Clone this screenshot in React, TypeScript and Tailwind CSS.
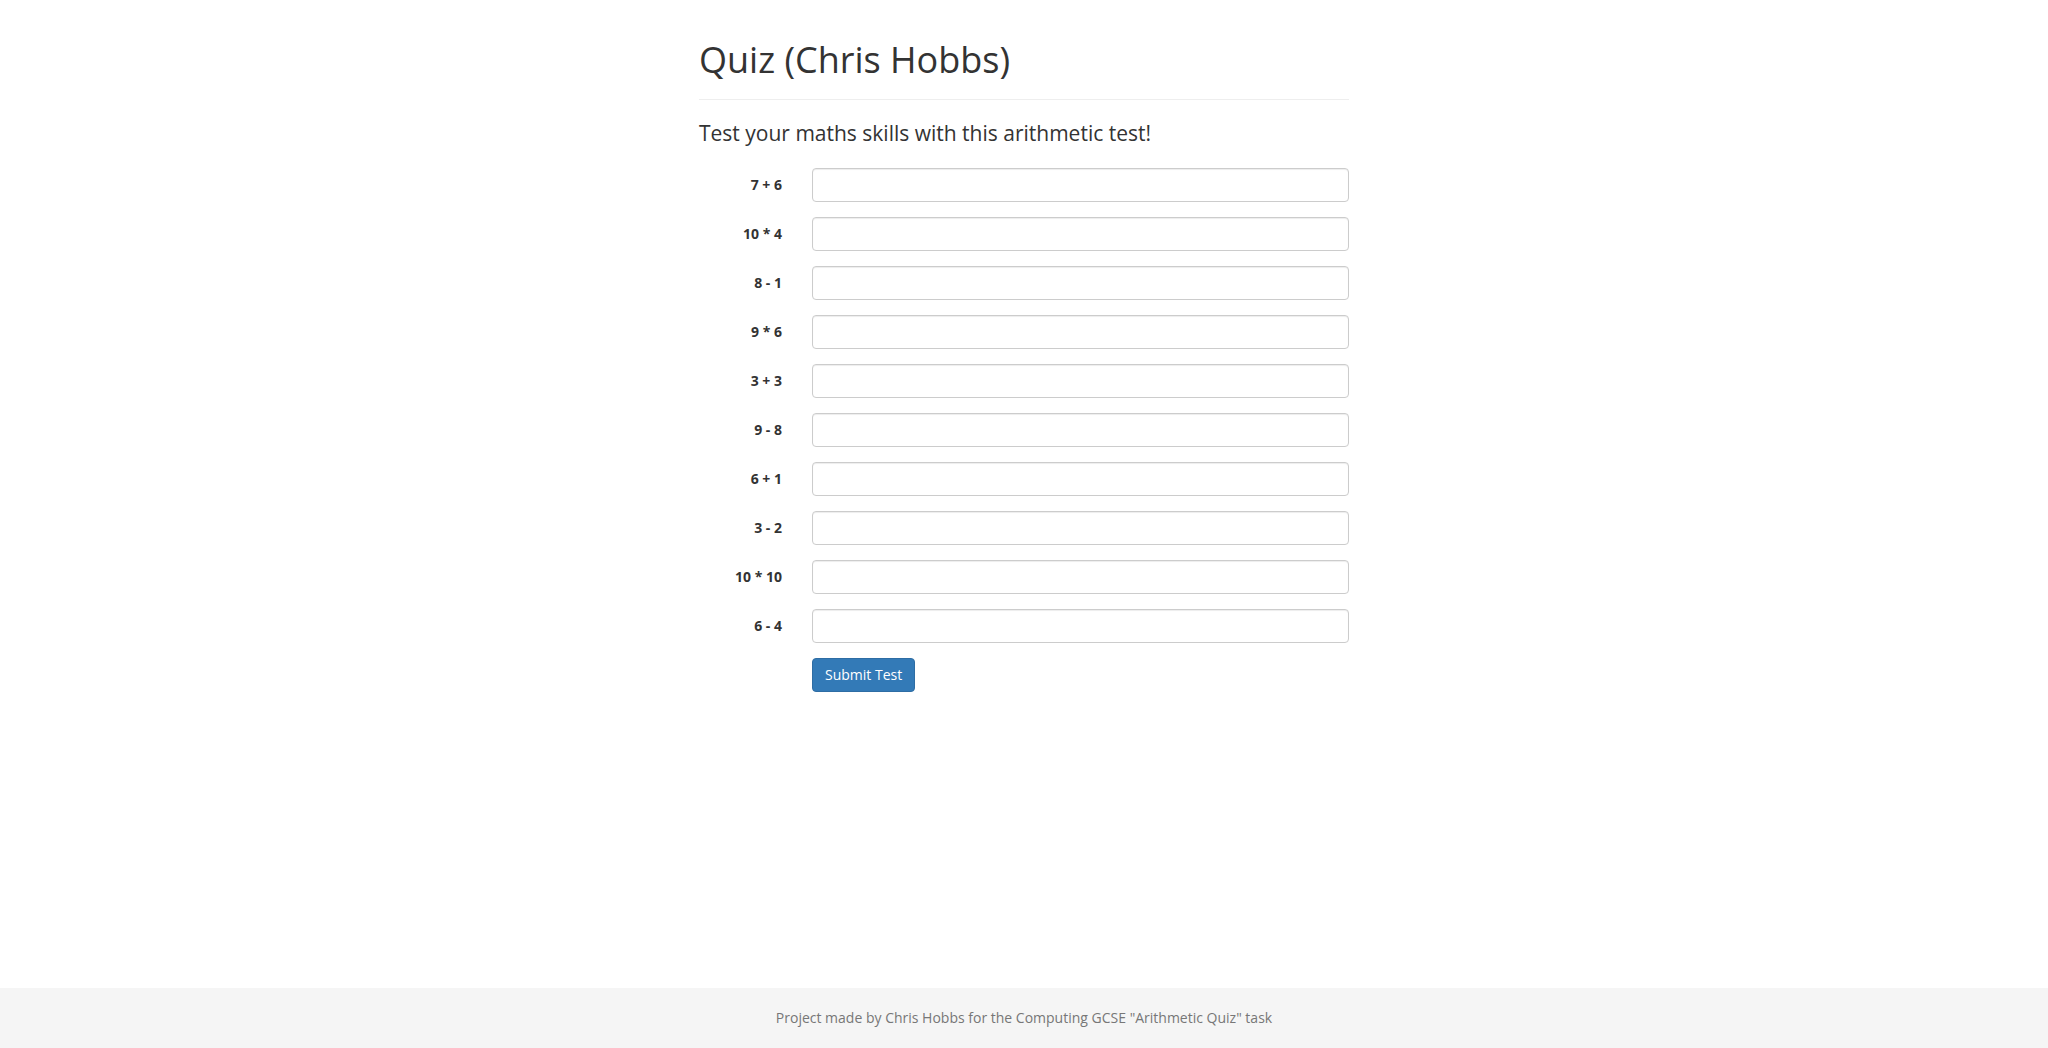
import React from "react";

const questions = ["7 + 6", "10 * 4", "8 - 1", "9 * 6", "3 + 3", "9 - 8", "6 + 1", "3 - 2", "10 * 10", "6 - 4"];

export default function App() {
  return (
    <div className="h-screen overflow-hidden flex flex-col bg-white text-[#333] font-['Open_Sans',sans-serif] text-[14px] leading-[20px]">
      <main className="flex-1 min-h-0">
        <div className="w-[650px] mx-auto">
          <div className="pt-[40px] pb-[9px] border-b border-[#eee]">
            <h1 className="text-[36px] leading-[1.1] font-normal mb-[10px]">Quiz (Chris Hobbs)</h1>
          </div>
          <p className="mt-[18px] text-[21px] leading-[30px] font-normal">
            Test your maths skills with this arithmetic test!
          </p>
          <form className="mt-[20px]" onSubmit={(e) => e.preventDefault()}>
            {questions.map((q, i) => (
              <div key={i} className="flex items-center mb-[15px]">
                <label className="w-[83px] text-right font-bold">{q}</label>
                <input
                  type="text"
                  className="ml-[30px] flex-1 h-[34px] px-3 rounded-[4px] border border-[#ccc] bg-white shadow-[inset_0_1px_1px_rgba(0,0,0,0.075)] outline-none"
                />
              </div>
            ))}
            <div className="pl-[113px]">
              <button
                type="submit"
                className="h-[34px] px-[12px] rounded-[4px] border border-[#2e6da4] bg-[#337ab7] text-white text-[14px]"
              >
                Submit Test
              </button>
            </div>
          </form>
        </div>
      </main>
      <footer className="h-[60px] shrink-0 bg-[#f5f5f5] flex items-center justify-center">
        <p className="text-[#777]">Project made by Chris Hobbs for the Computing GCSE "Arithmetic Quiz" task</p>
      </footer>
    </div>
  );
}
